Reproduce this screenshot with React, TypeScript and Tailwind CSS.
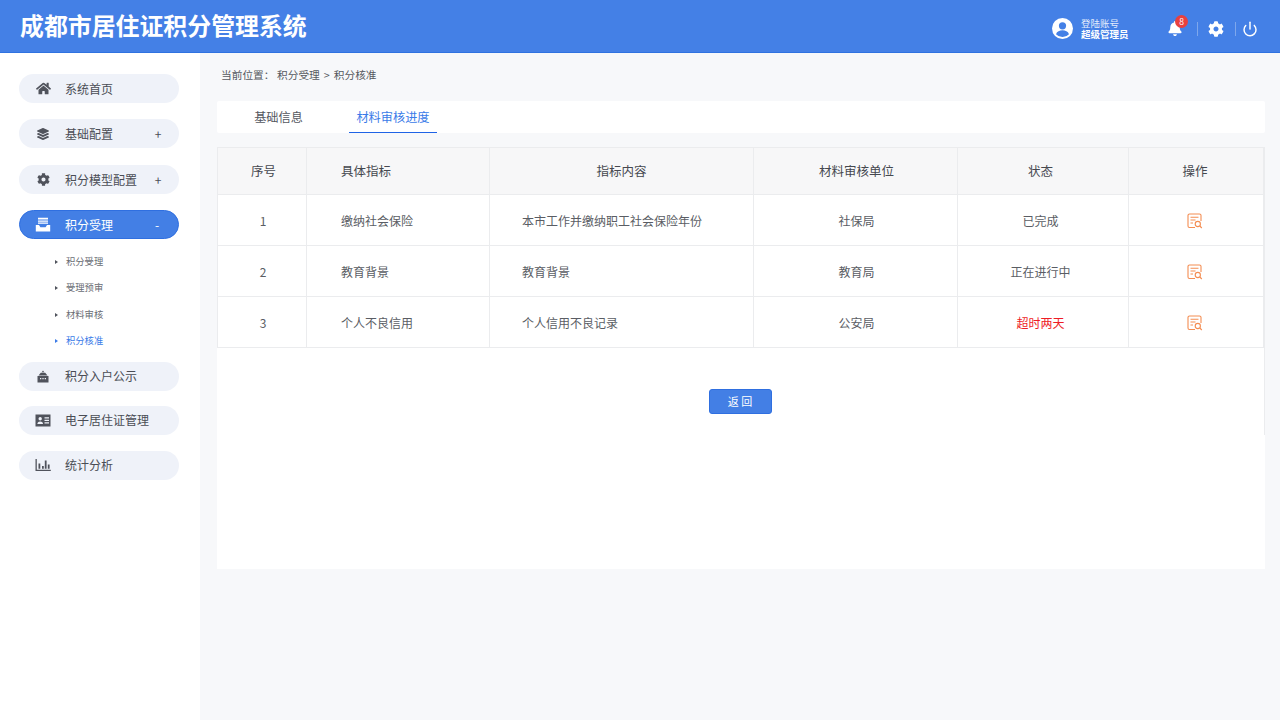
import React from 'react';
import { Power } from 'lucide-react';
import { FaBell, FaCog, FaHome, FaLayerGroup } from 'react-icons/fa';

const font = { fontFamily: '"Noto Sans CJK SC", "Noto Sans", sans-serif' };

const InboxIcon = () => (
  <svg viewBox="0 0 16 16" className="w-[16px] h-[16px]" fill="currentColor">
    <path d="M3 0.800h10v1.800H3zM3 3.400h10v1.300H3zM3 5.500h10v1.300H3z" />
    <path d="M0.800 8H4l1.400 2.200h5.200L12 8h3.200v6.400H0.800V8z" />
  </svg>
);

const BankIcon = () => (
  <svg viewBox="0 0 12 13" className="w-[12px] h-[13px]" fill="currentColor">
    <path d="M6 0.500 4.700 2.200h2.600L6 0.500z" />
    <path d="M3.800 2.800h4.400L10.500 5.500h-9L3.800 2.800z" />
    <path fillRule="evenodd" d="M0.500 6h11v6.500h-11V6zM3 8v1.300h1.300V8H3zm2.350 0v1.300h1.300V8h-1.300zm2.350 0v1.300H9V8H7.700z" />
  </svg>
);

const CardIcon = () => (
  <svg viewBox="0 0 16 13" className="w-[16px] h-[13px]" fill="currentColor">
    <path fillRule="evenodd" d="M0.500 0.500h15v12h-15V0.500zM5.200 3a1.700 1.700 0 1 0 0 3.400 1.700 1.700 0 0 0 0-3.400zM2.400 10h5.600a2.800 2.500 0 0 0-5.600 0zM9.500 3.200v1.300H14V3.200H9.500zm0 2.500V7H14V5.700H9.500zm0 2.500v1.300H14V8.200H9.500z" />
  </svg>
);

const ChartIcon = () => (
  <svg viewBox="0 0 16 12" className="w-[16px] h-[12px]" fill="currentColor">
    <path d="M0.500 0h1.300v10.700h14v1.300H0.500V0z" />
    <path d="M3.500 4.500h1.800v5.200H3.500zM7 7h1.800v2.700H7zM9.800 1.500h1.800v8.200H9.800zM12.800 5.500h1.800v4.200h-1.800z" />
  </svg>
);

const UserIcon = () => (
  <svg viewBox="0 0 21 21" className="w-[21px] h-[21px]">
    <circle cx="10.500" cy="10.500" r="10.500" fill="#ffffff" />
    <circle cx="10.500" cy="7.800" r="3.600" fill="#4480e6" />
    <path d="M4 16.200c1-2.800 3.600-3.900 6.500-3.900s5.500 1.100 6.500 3.900a8.600 8.600 0 0 1-6.500 2.800A8.600 8.600 0 0 1 4 16.200z" fill="#4480e6" />
  </svg>
);

const ReviewIcon = () => (
  <svg viewBox="0 0 16 16" className="w-[16px] h-[16px]" fill="none" stroke="#f48d52" strokeWidth="1.100">
    <path d="M8 14.500H2.500A1.500 1.500 0 0 1 1 13V2.500A1.500 1.500 0 0 1 2.500 1h10A1.500 1.500 0 0 1 14 2.500V8" />
    <path d="M3.500 4.200h8M3.500 7h5M3.500 10h2.500" />
    <circle cx="10.800" cy="11" r="2.600" />
    <path d="m12.800 13 2 2" />
  </svg>
);

type Nav = { label: string; icon: React.ReactNode; mark?: string; active?: boolean; after: string };

const navTop: Nav[] = [
  { label: '系统首页', icon: <FaHome className="w-[15px] h-[15px]" />, after: 'mb-[16px]' },
  { label: '基础配置', icon: <FaLayerGroup className="w-[12px] h-[12px]" />, mark: '+', after: 'mb-[17px]' },
  { label: '积分模型配置', icon: <FaCog className="w-[13px] h-[13px]" />, mark: '+', after: 'mb-[16px]' },
  { label: '积分受理', icon: <InboxIcon />, mark: '-', active: true, after: 'mb-[10px]' },
];

const navBottom: Nav[] = [
  { label: '积分入户公示', icon: <BankIcon />, after: 'mb-[15px]' },
  { label: '电子居住证管理', icon: <CardIcon />, after: 'mb-[16px]' },
  { label: '统计分析', icon: <ChartIcon />, after: '' },
];

const subItems = ['积分受理', '受理预审', '材料审核', '积分核准'];

const rows = [
  { no: '1', name: '缴纳社会保险', content: '本市工作并缴纳职工社会保险年份', unit: '社保局', status: '已完成', red: false },
  { no: '2', name: '教育背景', content: '教育背景', unit: '教育局', status: '正在进行中', red: false },
  { no: '3', name: '个人不良信用', content: '个人信用不良记录', unit: '公安局', status: '超时两天', red: true },
];

const NavPill: React.FC<{ item: Nav }> = ({ item }) => (
  <div
    className={`flex items-center h-[29px] rounded-full text-[12px] whitespace-nowrap ${item.after} ${
      item.active ? 'bg-[#437fe5] border border-[#2f6fe0] text-white' : 'bg-[#eff2f9] text-[#4a4d55]'
    }`}
  >
    <span className={`flex justify-center shrink-0 ${item.active ? 'w-[45px] text-white' : 'w-[46px] pl-[2px] text-[#50535c]'}`}>{item.icon}</span>
    <span className="flex-1">{item.label}</span>
    {item.mark && <span className="w-[42px] text-center text-[12px]">{item.mark}</span>}
  </div>
);

export default function App() {
  return (
    <div className="w-[1280px] h-[720px] overflow-hidden flex flex-col bg-[#f7f8fa]" style={font}>
      <header className="h-[53px] shrink-0 bg-[#4480e6] border-b border-[#2f72e0] flex items-center pl-[20px] pr-[22px] text-white">
        <h1 className="text-[23.900px] leading-none font-bold flex-1 pb-[2px]">成都市居住证积分管理系统</h1>
        <div className="flex items-center pt-[5px]">
          <UserIcon />
          <div className="ml-[8px] text-[9.500px] leading-[11px] w-[48px] text-[#e4edfc] whitespace-nowrap">
            <div>登陆账号</div>
            <div className="font-bold text-white">超级管理员</div>
          </div>
          <div className="relative ml-[39px]">
            <FaBell className="w-[14px] h-[15px]" />
            <span className="absolute -top-[6px] left-[7px] w-[13px] h-[13px] rounded-full bg-[#e8403e] text-[8.500px] leading-[13px] text-center">8</span>
          </div>
          <div className="ml-[15px] w-px h-[14px] bg-[#7ea7ec]" />
          <FaCog className="ml-[10px] w-[16px] h-[16px]" />
          <div className="ml-[11px] w-px h-[14px] bg-[#7ea7ec]" />
          <Power className="ml-[6px] w-[16px] h-[16px]" strokeWidth={2.200} />
        </div>
      </header>
      <div className="flex flex-1 min-h-0">
        <aside className="w-[200px] shrink-0 bg-white pt-[21px] pl-[19px] pr-[21px]">
          {navTop.map((n) => (
            <NavPill key={n.label} item={n} />
          ))}
          <ul className="mb-[7.500px]">
            {subItems.map((s, i) => (
              <li
                key={s}
                className={`flex items-center h-[26.300px] pl-[36px] text-[9.300px] whitespace-nowrap ${i === 3 ? 'text-[#3a7be8]' : 'text-[#6a6d74]'}`}
              >
                <span className={`w-0 h-0 mr-[8px] border-y-[2.500px] border-y-transparent border-l-[3px] ${i === 3 ? 'border-l-[#3a7be8]' : 'border-l-[#50535c]'}`} />
                {s}
              </li>
            ))}
          </ul>
          {navBottom.map((n) => (
            <NavPill key={n.label} item={n} />
          ))}
        </aside>
        <main className="flex-1 pl-[17px] pr-[17px]">
          <div className="h-[48px] pl-[4px] pt-[13px] flex items-start text-[10.700px] leading-[18px] text-[#55585f] whitespace-nowrap">
            <span className="w-[56px]">当前位置：</span>
            <span>积分受理</span>
            <span className="w-[14px] text-center">&gt;</span>
            <span>积分核准</span>
          </div>
          <div className="h-[32px] bg-white rounded-[2px] flex text-[12.200px] mb-[14px]">
            <div className="w-[123px] text-center leading-[32px] text-[#55585f]">基础信息</div>
            <div className="ml-[9px] w-[88px] text-center leading-[32px] text-[#3a7be8] border-b border-[#1f63e6]">材料审核进度</div>
          </div>
          <div className="h-[422px] bg-white">
            <div className="h-[288px] border-r border-[#ebecee]">
              <table className="w-[1046px] table-fixed border-collapse text-[12px] text-[#5a5d64]">
                <colgroup>
                  <col className="w-[89px]" />
                  <col className="w-[183px]" />
                  <col className="w-[264px]" />
                  <col className="w-[204px]" />
                  <col className="w-[171px]" />
                  <col className="w-[135px]" />
                </colgroup>
                <thead>
                  <tr className="h-[47px] bg-[#f7f7f8] text-[#45484f] text-[12.500px]">
                    <th className="font-normal border border-[#ebecee] pl-[3px]">序号</th>
                    <th className="font-normal border border-[#ebecee] text-left pl-[34px]">具体指标</th>
                    <th className="font-normal border border-[#ebecee]">指标内容</th>
                    <th className="font-normal border border-[#ebecee] pl-[2px]">材料审核单位</th>
                    <th className="font-normal border border-[#ebecee] pr-[5px]">状态</th>
                    <th className="font-normal border border-[#ebecee] pr-[2px]">操作</th>
                  </tr>
                </thead>
                <tbody>
                  {rows.map((r) => (
                    <tr key={r.no} className="h-[51px]">
                      <td className="border border-[#ebecee] text-center pl-[2px] pt-[2px]">{r.no}</td>
                      <td className="border border-[#ebecee] pl-[34px] pt-[2px]">{r.name}</td>
                      <td className="border border-[#ebecee] pl-[32px] pt-[2px]">{r.content}</td>
                      <td className="border border-[#ebecee] text-center pl-[2px] pt-[2px]">{r.unit}</td>
                      <td className={`border border-[#ebecee] text-center pr-[5px] pt-[2px] ${r.red ? 'text-[#ee1c25]' : ''}`}>{r.status}</td>
                      <td className="border border-[#ebecee] pr-[2px] pt-[2px]">
                        <div className="flex justify-center">
                          <ReviewIcon />
                        </div>
                      </td>
                    </tr>
                  ))}
                </tbody>
              </table>
              <div className="flex justify-center mt-[41px] pr-[1px]">
                <button className="w-[63px] h-[25px] rounded-[3px] bg-[#437fe5] border border-[#2f6fe0] text-white text-[11px]">返 回</button>
              </div>
            </div>
          </div>
        </main>
      </div>
    </div>
  );
}
